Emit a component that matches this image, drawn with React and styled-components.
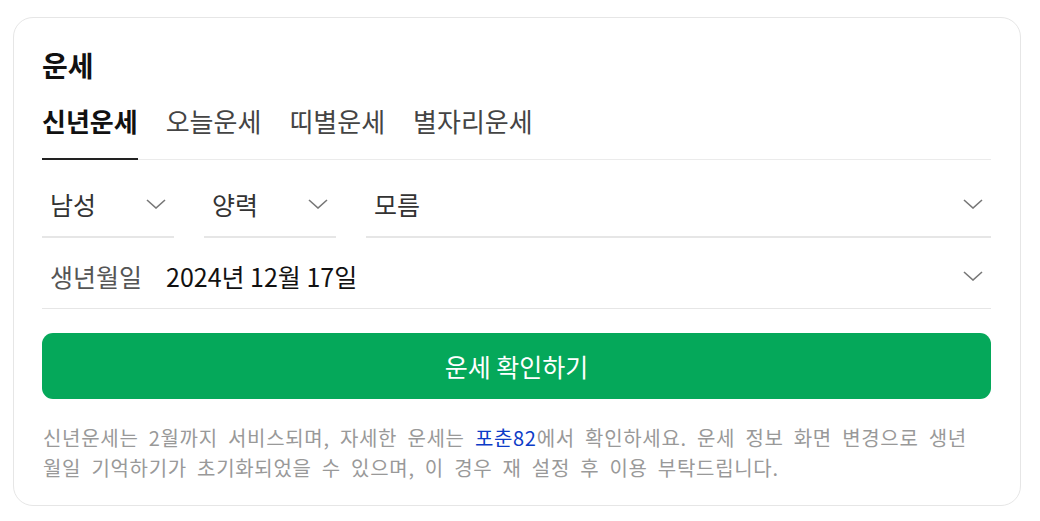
import React from "react";
import styled, { createGlobalStyle } from "styled-components";

const Global = createGlobalStyle`
  html, body { margin: 0; padding: 0; background: #fff; }
  body { font-family: "Noto Sans CJK KR", "Noto Sans", sans-serif; -webkit-font-smoothing: antialiased; }
  * { box-sizing: border-box; }
`;

const Card = styled.section`
  margin: 17px 0 0 13px;
  width: 1008px;
  border: 1px solid #e6e6e6;
  border-radius: 20px;
  padding: 31px 29px 22px 28px;
  background: #fff;
`;

const Title = styled.h2`
  margin: 0;
  font-size: 28px;
  line-height: 32px;
  font-weight: 700;
  color: #111;
`;

const Tabs = styled.div`
  display: flex;
  gap: 28px;
  border-bottom: 1px solid #ebebeb;
`;

const Tab = styled.div`
  position: relative;
  padding: 25px 0 23px;
  font-size: 26px;
  line-height: 30px;
  font-weight: ${(p) => (p.$active ? 700 : 400)};
  color: ${(p) => (p.$active ? "#111" : "#444")};
  &::after {
    content: "";
    position: absolute;
    left: 0;
    right: 0;
    bottom: -1px;
    height: 2px;
    background: ${(p) => (p.$active ? "#222" : "transparent")};
  }
`;

const SelectRow = styled.div`
  display: grid;
  grid-template-columns: 132px 132px 1fr;
  gap: 30px;
`;

const Select = styled.div`
  display: flex;
  align-items: center;
  justify-content: space-between;
  padding: 28px 8px 16px 8px;
  border-bottom: 2px solid #e6e6e6;
  font-size: 25px;
  line-height: 32px;
  color: #333;
`;

const BirthRow = styled.div`
  display: flex;
  align-items: center;
  padding: 22px 8px 16px 8px;
  border-bottom: 1px solid #e6e6e6;
  font-size: 25px;
  line-height: 32px;
`;

const Label = styled.span`
  color: #555;
  margin-right: 24px;
`;

const DateText = styled.span`
  flex: 1;
  color: #111;
`;

const Button = styled.button`
  display: block;
  width: 100%;
  margin-top: 24px;
  height: 66px;
  border: 0;
  border-radius: 11px;
  background: #05a85a;
  color: #fff;
  font-family: inherit;
  font-size: 25px;
`;

const Notice = styled.p`
  margin: 24px 0 0;
  padding: 0 22px 0 1px;
  font-size: 20px;
  line-height: 30px;
  color: #999;
  letter-spacing: 0.7px;
  word-spacing: 5px;
`;

const Link = styled.a`
  color: #0d3cc7;
  text-decoration: none;
`;

const Chevron = () => (
  <svg width="20" height="10" viewBox="0 0 20 10" fill="none">
    <path d="M1 1 L10 9 L19 1" stroke="#777" strokeWidth="1.6" />
  </svg>
);

export default function App() {
  return (
    <>
      <Global />
      <Card>
        <Title>운세</Title>
        <Tabs>
          <Tab $active>신년운세</Tab>
          <Tab>오늘운세</Tab>
          <Tab>띠별운세</Tab>
          <Tab>별자리운세</Tab>
        </Tabs>
        <SelectRow>
          <Select>
            <span>남성</span>
            <Chevron />
          </Select>
          <Select>
            <span>양력</span>
            <Chevron />
          </Select>
          <Select>
            <span>모름</span>
            <Chevron />
          </Select>
        </SelectRow>
        <BirthRow>
          <Label>생년월일</Label>
          <DateText>2024년 12월 17일</DateText>
          <Chevron />
        </BirthRow>
        <Button>운세 확인하기</Button>
        <Notice>
          신년운세는 2월까지 서비스되며, 자세한 운세는 <Link href="#">포춘82</Link>에서 확인하세요. 운세 정보 화면 변경으로 생년월일 기억하기가 초기화되었을 수 있으며, 이 경우 재 설정 후 이용 부탁드립니다.
        </Notice>
      </Card>
    </>
  );
}
